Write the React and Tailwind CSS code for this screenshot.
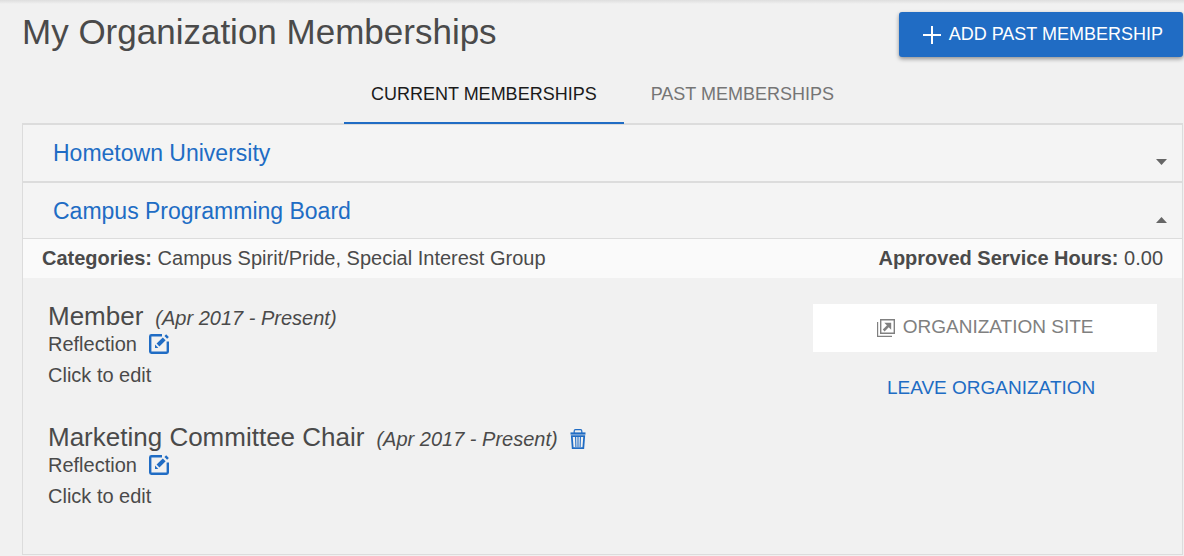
import { useState } from 'react';

const roles = [
  { title: 'Member', period: '(Apr 2017 - Present)', removable: false },
  { title: 'Marketing Committee Chair', period: '(Apr 2017 - Present)', removable: true },
];

export default function App() {
  const [tab, setTab] = useState('current');

  return (
    <main className="bg-[#f1f1f1] pb-px font-['Liberation_Sans',Arial,sans-serif] text-[20px] leading-6 text-[#4a4a4a]">
      <div className="h-1 bg-linear-to-b from-[#dedede] to-[#f1f1f1]" />
      <div className="pt-2 pr-px pl-[22px]">
        {/* Header */}
        <header className="flex items-start justify-between">
          <h1 className="text-[35px] leading-10">My Organization Memberships</h1>
          <button
            type="button"
            className="flex h-[45px] items-center gap-2 rounded-[3px] bg-[#206cc4] pr-5 pb-0.5 pl-6 text-[18px] font-medium text-white shadow-[0_2px_4px_rgba(0,0,0,0.4)]"
          >
            <PlusIcon />
            ADD PAST MEMBERSHIP
          </button>
        </header>

        {/* Tabs */}
        <div role="tablist" className="relative mt-1.5 flex justify-center">
          <Tab label="CURRENT MEMBERSHIPS" active={tab === 'current'} onClick={() => setTab('current')} />
          <Tab label="PAST MEMBERSHIPS" active={tab === 'past'} onClick={() => setTab('past')} />
        </div>

        {/* Organizations */}
        <section className="-mt-px border-x border-b border-[#dcdcdc]">
          <OrgHeader name="Hometown University" />
          <OrgHeader name="Campus Programming Board" open />

          <div className="flex justify-between bg-[#fafafa] px-[19px] pt-[7px] pb-2">
            <p><b>Categories:</b> Campus Spirit/Pride, Special Interest Group</p>
            <p><b>Approved Service Hours:</b> 0.00</p>
          </div>

          <div className="flex items-start justify-between px-[25px] pt-6 pb-[46px]">
            <div className="flex flex-col gap-9">
              {roles.map((role) => (
                <Role key={role.title} {...role} />
              ))}
            </div>
            <div className="mt-0.5 flex w-[31%] flex-col items-center gap-6 text-[19px]">
              <a href="#site" className="flex h-12 w-full items-center justify-center gap-2 bg-white pb-0.5 text-[#808080]">
                <SiteIcon />
                ORGANIZATION SITE
              </a>
              <button type="button" className="pl-3 text-[#206cc4]">LEAVE ORGANIZATION</button>
            </div>
          </div>
        </section>
      </div>
    </main>
  );
}

function Tab({ label, active, onClick }) {
  return (
    <button
      type="button"
      role="tab"
      aria-selected={active}
      onClick={onClick}
      className={`h-[61px] border-b-2 px-[27px] pt-0.5 text-[18px] ${active ? 'border-[#206cc4] text-[#1a1a1a]' : 'border-transparent text-[#757575]'}`}
    >
      {label}
    </button>
  );
}

function OrgHeader({ name, open = false }) {
  return (
    <button
      type="button"
      aria-expanded={open}
      className={`flex h-[58px] w-full items-center justify-between border-t-2 border-[#dcdcdc] bg-[#f4f4f4] pr-[15px] pl-[30px] text-[23px] text-[#206cc4] ${open ? 'border-b' : ''}`}
    >
      {name}
      <svg viewBox="0 0 11 6" className="mt-[18px] h-1.5 w-[11px]" fill="#666">
        {open ? <path d="M0 6 5.5 0 11 6z" /> : <path d="M0 0h11L5.5 6z" />}
      </svg>
    </button>
  );
}

function Role({ title, period, removable }) {
  return (
    <article>
      <div className="flex items-baseline gap-3 pb-0.5">
        <h2 className="text-[26px] leading-7">{title}</h2>
        <em>{period}</em>
        {removable && (
          <button type="button" aria-label="Remove role" className="self-end pb-0.5">
            <TrashIcon />
          </button>
        )}
      </div>
      <div className="flex items-center gap-3">
        <span>Reflection</span>
        <button type="button" aria-label="Edit reflection">
          <EditIcon />
        </button>
      </div>
      <button type="button" className="mt-[7px] block">Click to edit</button>
    </article>
  );
}

function PlusIcon() {
  return (
    <svg viewBox="0 0 18 18" className="mt-0.5 size-[18px]" stroke="#fff" strokeWidth="2">
      <path d="M9 0v18M0 9h18" />
    </svg>
  );
}

function EditIcon() {
  return (
    <svg viewBox="0 0 20 20" className="size-5" fill="none">
      <path d="M13 1.2H2.4Q1.2 1.2 1.2 2.4v15.2q0 1.2 1.2 1.2h15.2q1.2 0 1.2-1.2V7.5" stroke="#206cc4" strokeWidth="2.4" />
      <path d="M6 10.6 9.4 14H6z" fill="#206cc4" />
      <path d="m9 11 6.2-6.2" stroke="#206cc4" strokeWidth="4" />
      <path d="m16.3 1.2 2.7 2.7" stroke="#206cc4" strokeWidth="2.4" />
    </svg>
  );
}

function TrashIcon() {
  return (
    <svg viewBox="0 0 16 20" className="h-5 w-4" fill="none" stroke="#206cc4">
      <path d="M4.2 4V2q0-1.3 1.3-1.3h5q1.3 0 1.3 1.3v2" strokeWidth="1.2" />
      <path d="M.5 4.5h15" strokeWidth="2.2" />
      <path d="m1.8 7.2.9 11.9h10.6l.9-11.9z" strokeWidth="1.8" />
      <path d="m5.6 8 .3 10M8 8v10M10.4 8l-.3 10" strokeWidth="1.1" />
    </svg>
  );
}

function SiteIcon() {
  return (
    <svg viewBox="0 0 18 18" className="mt-0.5 size-[18px]" fill="none" stroke="#808080">
      <path d="M3.7.7h13.6v13.6H3.7z" strokeWidth="1.4" />
      <path d="M.6 3v14.4H15" strokeWidth="1.2" />
      <path d="M6.7 11.5 12 6.2" strokeWidth="2.6" />
      <path d="M7.3 3.8h6.9v6.9z" fill="#808080" stroke="none" />
    </svg>
  );
}
